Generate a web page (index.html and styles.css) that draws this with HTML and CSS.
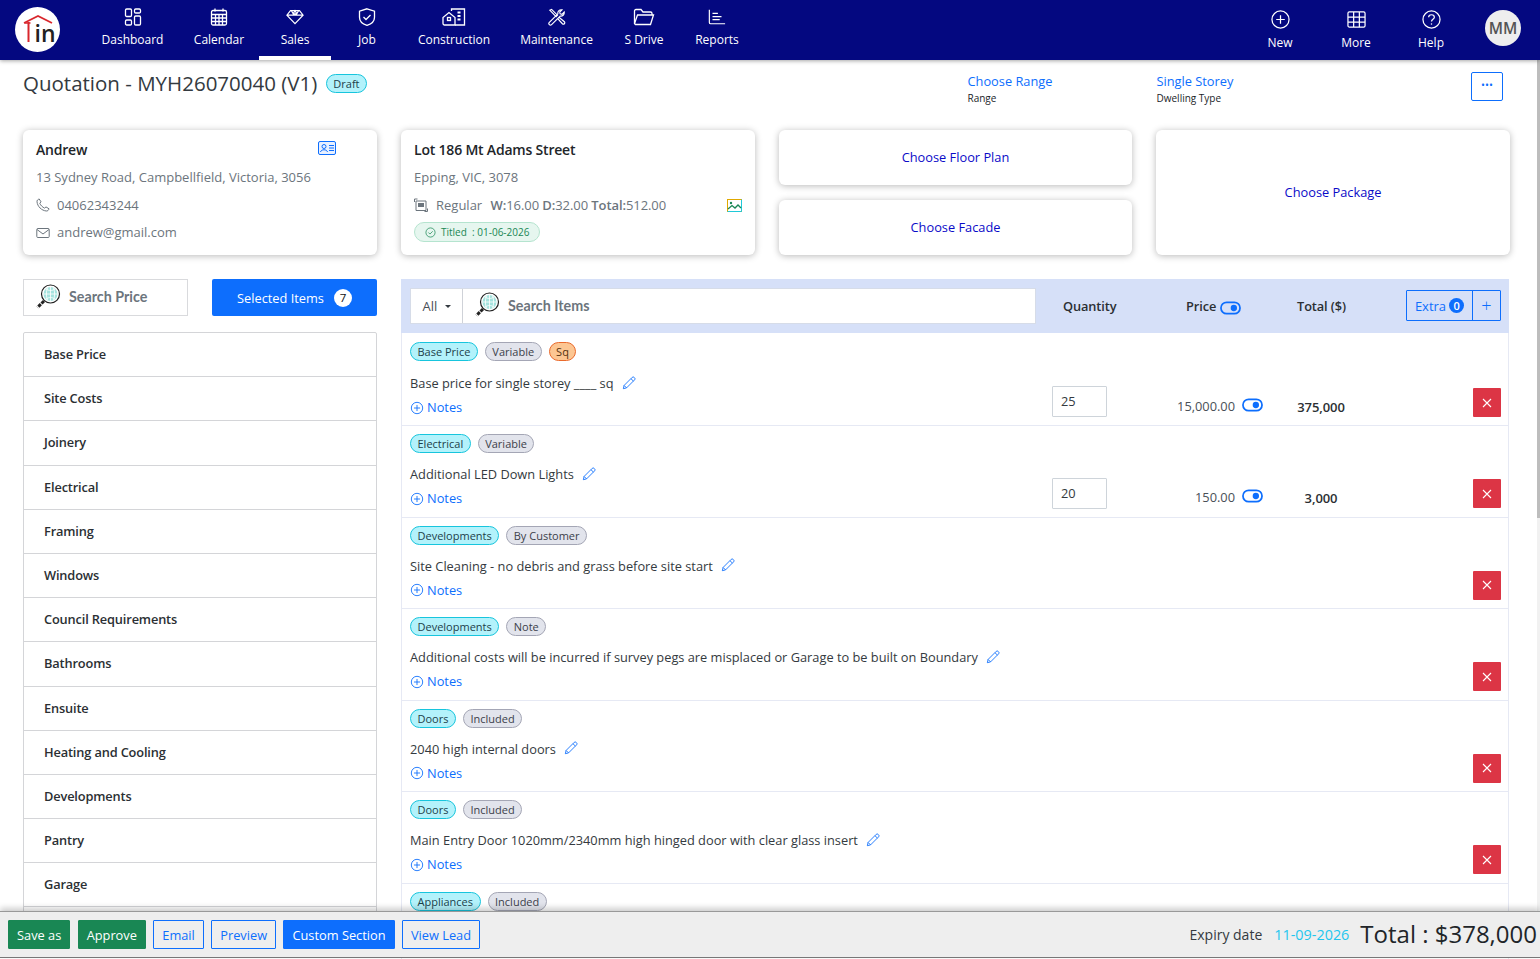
FILE: index.html
```html
<!DOCTYPE html>
<html lang="en">
<head>
<meta charset="utf-8">
<title>Quotation</title>
<link rel="stylesheet" href="styles.css">
</head>
<body>
<svg class="defs" width="0" height="0">
  <symbol id="pen" viewBox="0 0 16 16"><path d="M11.6 1.6a1.6 1.6 0 0 1 2.3 0l.5.5a1.6 1.6 0 0 1 0 2.3L5.2 13.600 1.500 14.500l.9-3.700zM10.200 3l2.800 2.800M2.400 10.800l2.800 2.800" fill="none" stroke="currentColor" stroke-width="1"/></symbol>
  <symbol id="plusc" viewBox="0 0 16 16"><circle cx="8" cy="8" r="6.500" fill="none" stroke="currentColor"/><path d="M8 4.500v7M4.500 8h7" stroke="currentColor"/></symbol>
  <symbol id="toggle" viewBox="0 0 22 14"><rect x="1" y="1" width="20" height="12" rx="6" fill="none" stroke="currentColor" stroke-width="1.800"/><circle cx="14.500" cy="7" r="3.300" fill="currentColor"/></symbol>
  <symbol id="x" viewBox="0 0 12 12"><path d="M2 2l8 8M10 2l-8 8" stroke="currentColor" stroke-width="1.100"/></symbol>
  <symbol id="lens" viewBox="0 0 26 26"><circle cx="15.500" cy="10" r="9" fill="#fff" stroke="#222" stroke-width="1.200"/><circle cx="15.500" cy="10" r="7" fill="#a5e3de"/><path d="M8.500 10h14M15.500 3v14M11 5c3 2 6 2 9 0M11 15c3-2 6-2 9 0M12.500 4c-1.500 3.500-1.500 8.500 0 12M18.500 4c1.500 3.500 1.500 8.500 0 12" fill="none" stroke="#fff" stroke-width=".8"/><path d="M9 17L2.500 23.500" stroke="#222" stroke-width="3" stroke-dasharray="3.500 1"/></symbol>
</svg>

<header class="nav">
  <div class="logo">
    <svg width="45" height="45" viewBox="0 0 45 45"><circle cx="22.500" cy="22.500" r="22.500" fill="#fff"/><path d="M9 16L23 9l14 7" fill="none" stroke="#d9262c" stroke-width="1.800"/><path d="M13.500 15v20" stroke="#d9262c" stroke-width="2"/><path d="M9.500 16h6" stroke="#d9262c" stroke-width="1.500"/><text x="19.500" y="35" class="logo-text">in</text></svg>
  </div>
  <nav class="nav-left">
    <a class="nav-item w-dash"><svg viewBox="0 0 18 18"><rect x="1.500" y="1" width="6" height="7.500" rx="1.200"/><rect x="10.500" y="1" width="6" height="4" rx="1.200"/><rect x="1.500" y="12" width="6" height="5" rx="1.200"/><rect x="10.500" y="8" width="6" height="9" rx="1.200"/></svg><span>Dashboard</span></a>
    <a class="nav-item w-cal"><svg viewBox="0 0 18 18"><rect x="1.500" y="2.500" width="15" height="14.500" rx="1.500"/><path d="M1.500 6.500h15M1.500 10h15M1.500 13.500h15M5.500 6.500V17M9 6.500V17M12.500 6.500V17M5 .5v3M13 .5v3"/></svg><span>Calendar</span></a>
    <a class="nav-item w-sales active"><svg viewBox="0 0 20 18"><path d="M5 2h10l4 5-9 9.500L1 7zM1 7h18M6 2l2 3.500L10 2l2 3.500L14 2M8 5.500h4"/></svg><span>Sales</span></a>
    <a class="nav-item w-job"><svg viewBox="0 0 18 18"><path d="M9 .8l7.500 2.400v6c0 4-3 6.800-7.500 8.200-4.500-1.400-7.500-4.200-7.500-8.200v-6z"/><path d="M5.500 9l2.500 2.500 4.500-4.500"/></svg><span>Job</span></a>
    <a class="nav-item w-con"><svg class="wide" viewBox="0 0 24 18"><path d="M1 15V9.500L7 4.500l6 5V17H2.500A1.500 1.500 0 0 1 1 15.500z"/><rect x="5.500" y="9.500" width="3" height="3"/><path d="M9.500 3V1h13v16H13"/><path d="M15.500 4.500h3M15.500 8h3M15.500 11.500h3" stroke-width="2"/></svg><span>Construction</span></a>
    <a class="nav-item w-mai"><svg viewBox="0 0 20 18"><path d="M2 1.500l2-1 6.500 6.500-1.500 1.500L2.500 2zM11 11l5 5.500a1.400 1.400 0 0 0 2.200-2.200L12.500 9.500M1.500 15l9.500-9.500c-.6-2.400 1.500-5 4.500-4.500l-2.500 2.500.5 2 2 .5L18 3.500c.5 3-2 5-4.500 4.500L4 17.500a1.700 1.700 0 0 1-2.500-2.500z"/></svg><span>Maintenance</span></a>
    <a class="nav-item w-sd"><svg class="wide" viewBox="0 0 22 18"><path d="M1.500 15V3a1.500 1.500 0 0 1 1.500-1.500h5l2 2.500h7.500A1.500 1.500 0 0 1 19 5.500V7"/><path d="M1.500 15.500l3-8.500h16l-3 9.500H2.500z"/></svg><span>S Drive</span></a>
    <a class="nav-item w-rep"><svg viewBox="0 0 20 18"><path d="M1.500 1v14a1.500 1.500 0 0 0 1.500 1.500h16M5 5h6M5 8.500h10M5 12h8"/></svg><span>Reports</span></a>
  </nav>
  <nav class="nav-right">
    <a class="nav-item low w-new"><svg viewBox="0 0 20 20"><circle cx="10" cy="10" r="9"/><path d="M10 5.500v9M5.500 10h9"/></svg><span>New</span></a>
    <a class="nav-item low w-more"><svg viewBox="0 0 20 20"><rect x="1" y="2" width="18" height="16" rx="1.500"/><path d="M1 7.500h18M1 12.800h18M7 2v16M13 2v16"/></svg><span>More</span></a>
    <a class="nav-item low w-help"><svg viewBox="0 0 20 20"><circle cx="10" cy="10" r="9"/><path d="M7 7.500C7 5.800 8.400 5 10 5s3 1 3 2.500c0 2.200-3 2.200-3 4.500"/><circle class="dot" cx="10" cy="14.800" r=".8"/></svg><span>Help</span></a>
    <div class="avatar">MM</div>
  </nav>
</header>

<div class="scrollbar"><div class="thumb"></div></div>

<main class="page">
  <section class="head">
    <div class="title-wrap">
      <h1>Quotation - MYH26070040 (V1)</h1>
      <span class="pill cyan draft">Draft</span>
    </div>
    <div class="meta m-range"><a>Choose Range</a><small>Range</small></div>
    <div class="meta m-dwell"><a>Single Storey</a><small>Dwelling Type</small></div>
    <button class="dots">•••</button>
  </section>

  <section class="cards">
    <article class="card info">
      <h2>Andrew</h2>
      <svg class="id-icon" width="18" height="14" viewBox="0 0 18 14"><rect x=".5" y=".5" width="17" height="13" rx="1.500" fill="#e8f0ff" stroke="#0d6efd"/><circle cx="6" cy="5.500" r="2" fill="none" stroke="#0d6efd"/><path d="M2.500 11c.5-3 6.500-3 7 0M11 4.500h5M11 7h5M11 9.500h5" fill="none" stroke="#0d6efd"/></svg>
      <p>13 Sydney Road, Campbellfield, Victoria, 3056</p>
      <p class="with-icon"><svg width="14" height="14" viewBox="0 0 14 14"><path d="M3.200 1L5 3.800 3.800 5.300c.8 2 2.700 3.900 4.800 4.800L10 8.900l3 1.900c-.3 1.500-1.500 2.300-2.700 2.200C5.500 12.500 1.500 8.500 1 3.800.9 2.500 1.700 1.300 3.200 1z" fill="none" stroke="#6c757d"/></svg>04062343244</p>
      <p class="with-icon"><svg width="14" height="14" viewBox="0 0 14 14"><rect x=".8" y="2.500" width="12.400" height="9" rx="1" fill="none" stroke="#6c757d"/><path d="M1 3.500L7 8l6-4.500" fill="none" stroke="#6c757d"/></svg>andrew@gmail.com</p>
    </article>
    <article class="card info">
      <h2>Lot 186 Mt Adams Street</h2>
      <p>Epping, VIC, 3078</p>
      <p class="with-icon lot"><svg width="14" height="14" viewBox="0 0 14 14"><path d="M2 3h10v9.500H2z" fill="none" stroke="#6c757d"/><path d="M.5 1h3M.5 1v3M10.500 13.500h3v-3" fill="none" stroke="#6c757d"/><rect x="4" y="5" width="6" height="4" fill="#6c757d"/></svg>Regular <span class="dims"><b>W:</b>16.00 <b>D:</b>32.00 <b>Total:</b>512.00</span>
        <svg class="img-icon" width="15" height="13" viewBox="0 0 15 13"><rect x=".5" y=".5" width="14" height="12" fill="none" stroke="#e0a800"/><path d="M.5 12.500h14v-12" fill="none" stroke="#20c9d8"/><circle cx="4" cy="4" r="1.200" fill="#198754"/><path d="M1 10l4-3.500 3 2.500 3-3 3 3" fill="none" stroke="#198754" stroke-width="1.300"/></svg></p>
      <span class="titled"><svg width="11" height="11" viewBox="0 0 12 12"><circle cx="6" cy="6" r="5" fill="none" stroke="#198754" stroke-width=".8"/><path d="M3.700 6l1.700 1.700 3-3" fill="none" stroke="#198754" stroke-width=".8"/></svg>Titled &nbsp;: 01-06-2026</span>
    </article>
    <div class="stack">
      <article class="card choose short"><a>Choose Floor Plan</a></article>
      <article class="card choose short"><a>Choose Facade</a></article>
    </div>
    <article class="card choose"><a>Choose Package</a></article>
  </section>

  <section class="content">
    <aside class="side">
      <div class="side-top">
        <div class="search-box"><svg width="26" height="26"><use href="#lens"/></svg><span>Search Price</span></div>
        <button class="selected">Selected Items <i>7</i></button>
      </div>
      <ul class="cats">
        <li>Base Price</li><li>Site Costs</li><li>Joinery</li><li>Electrical</li><li>Framing</li><li>Windows</li><li>Council Requirements</li><li>Bathrooms</li><li>Ensuite</li><li>Heating and Cooling</li><li>Developments</li><li>Pantry</li><li>Garage</li><li class="blank"></li>
      </ul>
    </aside>

    <div class="table">
      <div class="thead">
        <div class="filter">
          <div class="all">All <i class="caret"></i></div>
          <div class="filter-search"><svg width="26" height="26"><use href="#lens"/></svg><span>Search Items</span></div>
        </div>
        <div class="th th-q">Quantity</div>
        <div class="th th-p">Price <svg class="tog" width="21" height="14"><use href="#toggle"/></svg></div>
        <div class="th th-t">Total ($)</div>
        <div class="extra"><span>Extra <i>0</i></span><b>+</b></div>
      </div>

      <div class="row row-first">
        <div class="row-main">
          <div class="pills"><span class="pill cyan">Base Price</span><span class="pill grey">Variable</span><span class="pill orange">Sq</span></div>
          <div class="desc">Base price for single storey ____ sq<svg width="14" height="14"><use href="#pen"/></svg></div>
          <a class="notes"><svg width="14" height="14"><use href="#plusc"/></svg>Notes</a>
        </div>
        <input class="qty" value="25" aria-label="Quantity">
        <div class="price">15,000.00<svg width="21" height="14"><use href="#toggle"/></svg></div>
        <div class="total">375,000</div>
        <button class="del"><svg width="12" height="12"><use href="#x"/></svg></button>
      </div>

      <div class="row">
        <div class="row-main">
          <div class="pills"><span class="pill cyan">Electrical</span><span class="pill grey">Variable</span></div>
          <div class="desc">Additional LED Down Lights<svg width="14" height="14"><use href="#pen"/></svg></div>
          <a class="notes"><svg width="14" height="14"><use href="#plusc"/></svg>Notes</a>
        </div>
        <input class="qty" value="20" aria-label="Quantity">
        <div class="price">150.00<svg width="21" height="14"><use href="#toggle"/></svg></div>
        <div class="total">3,000</div>
        <button class="del"><svg width="12" height="12"><use href="#x"/></svg></button>
      </div>

      <div class="row">
        <div class="row-main">
          <div class="pills"><span class="pill cyan">Developments</span><span class="pill grey">By Customer</span></div>
          <div class="desc">Site Cleaning - no debris and grass before site start<svg width="14" height="14"><use href="#pen"/></svg></div>
          <a class="notes"><svg width="14" height="14"><use href="#plusc"/></svg>Notes</a>
        </div>
        <button class="del"><svg width="12" height="12"><use href="#x"/></svg></button>
      </div>

      <div class="row">
        <div class="row-main">
          <div class="pills"><span class="pill cyan">Developments</span><span class="pill grey">Note</span></div>
          <div class="desc">Additional costs will be incurred if survey pegs are misplaced or Garage to be built on Boundary<svg width="14" height="14"><use href="#pen"/></svg></div>
          <a class="notes"><svg width="14" height="14"><use href="#plusc"/></svg>Notes</a>
        </div>
        <button class="del"><svg width="12" height="12"><use href="#x"/></svg></button>
      </div>

      <div class="row">
        <div class="row-main">
          <div class="pills"><span class="pill cyan">Doors</span><span class="pill grey">Included</span></div>
          <div class="desc">2040 high internal doors<svg width="14" height="14"><use href="#pen"/></svg></div>
          <a class="notes"><svg width="14" height="14"><use href="#plusc"/></svg>Notes</a>
        </div>
        <button class="del"><svg width="12" height="12"><use href="#x"/></svg></button>
      </div>

      <div class="row">
        <div class="row-main">
          <div class="pills"><span class="pill cyan">Doors</span><span class="pill grey">Included</span></div>
          <div class="desc">Main Entry Door 1020mm/2340mm high hinged door with clear glass insert<svg width="14" height="14"><use href="#pen"/></svg></div>
          <a class="notes"><svg width="14" height="14"><use href="#plusc"/></svg>Notes</a>
        </div>
        <button class="del"><svg width="12" height="12"><use href="#x"/></svg></button>
      </div>

      <div class="row">
        <div class="row-main">
          <div class="pills"><span class="pill cyan">Appliances</span><span class="pill grey">Included</span></div>
        </div>
      </div>
    </div>
  </section>
</main>

<footer class="foot">
  <div class="actions">
    <button class="btn green">Save as</button>
    <button class="btn green">Approve</button>
    <button class="btn outline">Email</button>
    <button class="btn outline">Preview</button>
    <button class="btn solid">Custom Section</button>
    <button class="btn outline">View Lead</button>
  </div>
  <div class="sum">
    <span class="exp-l">Expiry date</span>
    <span class="exp-d">11-09-2026</span>
    <span class="grand">Total : $378,000</span>
  </div>
</footer>
</body>
</html>
```

FILE: styles.css
```css
* { box-sizing: border-box; }
html, body { margin: 0; height: 959px; overflow: hidden; }
body { font-family: "Open Sans", "Liberation Sans", sans-serif; font-size: 12.800px; color: #212529; background: #fff; position: relative; }
.defs { position: absolute; }
a { color: inherit; text-decoration: none; }
button { font-family: inherit; cursor: pointer; }

.nav { height: 60px; background: #040880; display: flex; padding-left: 15px; color: #fff; box-shadow: 0 1px 4px rgba(0,0,0,.35); position: relative; z-index: 2; }
.logo { margin-top: 7px; height: 45px; width: 45px; flex: none; }
.logo-text { font-family: "Open Sans", sans-serif; font-weight: 600; font-size: 23px; fill: #222; }
.nav-left { display: flex; margin-left: 42px; margin-right: auto; }
.nav-right { display: flex; align-items: flex-start; padding-right: 19px; }
.nav-item { display: flex; flex-direction: column; align-items: center; padding-top: 8px; height: 60px; font-size: 12px; line-height: 17px; white-space: nowrap; flex: none; }
.nav-item svg { width: 18px; height: 18px; margin-bottom: 5px; fill: none; stroke: #fff; stroke-width: 1.300; }
.nav-item svg.wide { width: 24px; }
.nav-item .dot { fill: #fff; stroke: none; }
.nav-item.active { border-bottom: 4px solid #fff; }
.nav-item.low { padding-top: 10px; }
.nav-item.low svg { width: 19px; height: 19px; }
.w-dash { width: 61px; margin-right: 31px; }
.w-cal { width: 50px; margin-right: 15px; }
.w-sales { width: 72px; margin-right: 14px; }
.w-job { width: 44px; margin-right: 29px; }
.w-con { width: 72px; margin-right: 30px; }
.w-mai { width: 73px; margin-right: 31px; }
.w-sd { width: 40px; margin-right: 31px; }
.w-rep { width: 44px; }
.w-new { width: 26px; margin-right: 48px; }
.w-more { width: 30px; margin-right: 47px; }
.w-help { width: 26px; margin-right: 41px; }
.avatar { width: 36px; height: 36px; margin-top: 10px; border-radius: 50%; background: #eee; color: #555; font-size: 15.500px; font-weight: 600; display: flex; align-items: center; justify-content: center; }

.scrollbar { position: absolute; left: 1537px; top: 60px; width: 3px; height: 851px; background: #f1f1f1; }
.thumb { height: 458px; background: #bdbdbd; }

.page { padding: 0 30px 0 23px; }
.head { height: 70px; position: relative; }
.title-wrap { display: flex; align-items: center; gap: 9px; padding-top: 9px; }
h1 { margin: 0; font-size: 20.500px; font-weight: 400; line-height: 28px; color: #343a40; }
.meta { position: absolute; top: 12px; display: flex; flex-direction: column; color: #0d6efd; }
.meta a { font-size: 12.800px; line-height: 19px; }
.meta small { font-size: 10px; line-height: 15px; color: #212529; }
.m-range { left: 944.500px; }
.m-dwell { left: 1133.500px; }
.dots { position: absolute; left: 1448px; top: 12px; width: 32px; height: 29px; border: 1px solid #0d6efd; border-radius: 2px; background: #fff; color: #0d6efd; font-size: 10.500px; line-height: 1; padding: 0 0 2px; }

.pill { display: inline-flex; align-items: center; height: 19px; padding: 0 6.500px; border-radius: 10px; font-size: 11px; border: 1px solid; white-space: nowrap; }
.cyan { background: #b3f2fb; border-color: #17c5dd; color: #1d3f4a; }
.grey { background: #e2e4ec; border-color: #a4a6b5; color: #3c3f4a; }
.orange { background: #fcc692; border-color: #ea6a2c; color: #53310f; }
.pill.draft { padding: 0 6px; }

.cards { display: grid; grid-template-columns: 354px 354px 353px 354px; grid-template-rows: 125px; column-gap: 24px; }
.card { background: #fff; border-radius: 6px; box-shadow: 0 1px 7px rgba(0,0,0,.28); position: relative; }
.info { padding: 9px 13px; }
.info h2 { margin: 0 0 7px; font-size: 14px; line-height: 22px; font-weight: 600; color: #212529; letter-spacing: -.2px; }
.info p { margin: 0 0 8.500px; font-size: 13px; line-height: 19px; color: #6c757d; display: flex; align-items: center; }
.with-icon svg { margin-right: 7px; flex: none; }
.id-icon { position: absolute; left: 295px; top: 11px; }
.lot { white-space: pre; }
.lot svg:first-child { margin-right: 8px; }
.dims { margin-left: 5px; letter-spacing: -.08px; }
.dims b { font-weight: 600; }
.lot .img-icon { position: absolute; left: 326px; margin: 0; }
.titled { display: inline-flex; align-items: center; gap: 5px; height: 20px; margin-top: -1px; padding: 0 10px; border-radius: 10px; background: #e6f6ef; border: 1px solid #b5e4cf; color: #198754; font-size: 10px; }
.stack { display: flex; flex-direction: column; gap: 15px; }
.short { height: 55px; }
.choose { display: flex; align-items: center; justify-content: center; padding-bottom: 1px; color: #0a0ac8; font-size: 12.800px; }

.content { display: flex; gap: 24px; margin-top: 24px; }
.side { width: 354px; flex: none; }
.side-top { display: flex; justify-content: space-between; height: 37px; }
.search-box { width: 165px; border: 1px solid #d9dadd; display: flex; align-items: center; gap: 8px; padding: 0 0 2px 11px; }
.search-box span, .filter-search span { font-family: Lato, sans-serif; font-weight: 700; font-size: 14.300px; color: #6c757d; }
.selected { width: 165px; border: 0; border-radius: 2px; background: #0d6efd; color: #fff; font-size: 12.800px; display: flex; align-items: center; justify-content: center; gap: 10px; padding: 0; }
.selected i { width: 18px; height: 18px; border-radius: 50%; background: #fff; color: #111; font-style: normal; font-size: 11.500px; display: flex; align-items: center; justify-content: center; }
.cats { list-style: none; margin: 16px 0 0; padding: 0; border: 1px solid #d4d5d8; border-radius: 2px; }
.cats li { height: 44.200px; line-height: 43.800px; padding-left: 20px; border-bottom: 1px solid #d4d5d8; font-size: 12.800px; font-weight: 600; color: #2b2f33; letter-spacing: -.15px; }

.table { width: 1108px; flex: none; border-right: 1px solid #e6e9f4; border-left: 1px solid #e6e9f4; }
.thead { height: 54px; background: #d6e0f8; display: flex; align-items: center; position: relative; margin: 0 -1px; }
.filter { display: flex; width: 626px; height: 36px; margin-left: 9px; background: #fff; border: 1px solid #d6dce8; }
.all { width: 52px; border-right: 1px solid #cfd2d8; display: flex; align-items: center; justify-content: center; gap: 8px; padding-left: 1px; color: #495057; font-size: 13px; }
.caret { width: 0; height: 0; border: 3px solid transparent; border-top-color: #343a40; border-bottom: 0; }
.filter-search { display: flex; align-items: center; gap: 8px; padding: 0 0 2px 11px; }
.th { position: absolute; font-size: 12.800px; font-weight: 600; color: #2b2f33; letter-spacing: -.1px; top: 18px; line-height: 18px; display: flex; align-items: center; gap: 4px; }
.th-q { left: 662px; }
.th-p { left: 785px; }
.th-p .tog { color: #0d6efd; margin-top: 4px; }
.th-t { left: 896px; }
.extra { position: absolute; left: 1005px; top: 11px; width: 95px; height: 31px; border: 1px solid #0d6efd; border-radius: 1px; display: flex; color: #0d6efd; }
.extra span { flex: 1; border-right: 1px solid #0d6efd; display: flex; align-items: center; justify-content: center; gap: 3px; font-size: 13px; }
.extra i { width: 15px; height: 15px; border-radius: 50%; background: #0d6efd; color: #fff; font-style: normal; font-weight: 600; font-size: 11px; display: flex; align-items: center; justify-content: center; }
.extra b { width: 27px; text-align: center; font-weight: 300; font-size: 18px; line-height: 28px; }

.row { height: 91.600px; border-bottom: 1px solid #e6e9f4; position: relative; padding: 8px 0 0 8px; }
.row-first { height: 93px; padding-top: 9px; }
.row-first .desc { margin-top: 13px; }
.row-first .price, .row-first .total { margin-top: 2px; }
.row-first .qty { top: 53px; }
.row-first .del { top: 55px; }
.pills { display: flex; gap: 7px; height: 19px; }
.desc { display: flex; align-items: center; gap: 8px; margin-top: 12px; font-size: 12.800px; line-height: 19px; color: #343a40; }
.desc svg { color: #0d6efd; flex: none; margin-bottom: 2px; }
.notes { display: flex; align-items: center; gap: 3px; margin-top: 5px; color: #0d6efd; font-size: 12.800px; line-height: 19px; }
.qty { position: absolute; left: 650px; top: 52px; width: 55px; height: 31px; border: 1px solid #ced4da; border-radius: 1px; padding: 0 8px 2px; font: 12.800px "Open Sans", sans-serif; color: #343a40; }
.price { position: absolute; right: 245px; top: 62px; display: flex; align-items: center; gap: 7px; font-size: 12.800px; line-height: 19px; color: #495057; }
.price svg { color: #0d6efd; margin-bottom: 3px; }
.total { position: absolute; left: 895px; width: 48px; top: 63px; text-align: center; font-size: 13px; font-weight: 600; line-height: 19px; color: #2b2f33; letter-spacing: -.1px; }
.del { position: absolute; left: 1071px; top: 53px; width: 28px; height: 29px; background: #dc3545; border: 0; border-radius: 1px; color: #fff; display: flex; align-items: center; justify-content: center; padding: 0; }

.foot { position: absolute; left: 0; right: 0; top: 911px; height: 47px; background: #eee; border-top: 1px solid #999; border-bottom: 1px solid #777; box-shadow: 0 -3px 6px rgba(0,0,0,.2); display: flex; justify-content: space-between; align-items: center; padding: 0 3px 0 8px; z-index: 3; }
.actions { display: flex; gap: 7.400px; }
.btn { height: 29px; border-radius: 1px; font-size: 12.800px; padding: 0 8px; border: 1px solid; background: transparent; }
.green { background: #198754; border-color: #198754; color: #fff; }
.outline { border-color: #0d6efd; color: #0d6efd; }
.solid { background: #0d6efd; border-color: #0d6efd; color: #fff; }
.sum { display: flex; align-items: center; }
.exp-l { font-size: 14px; color: #343a40; margin-right: 12px; }
.exp-d { font-size: 14.400px; color: #1fc6ee; margin-right: 11px; }
.grand { font-size: 24px; color: #212529; line-height: 30px; padding-bottom: 2px; }
```
